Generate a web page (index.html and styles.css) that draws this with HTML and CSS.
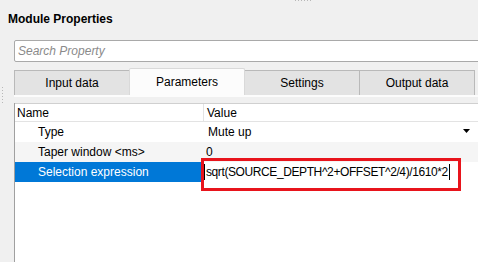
FILE: index.html
```html
<!DOCTYPE html>
<html>
<head>
<meta charset="utf-8">
<link rel="stylesheet" href="styles.css">
</head>
<body>
<div class="top-grip"></div>
<div class="layout">
  <div class="gutter"><div class="side-grip"></div></div>
  <div class="main">
    <div class="title">Module Properties</div>
    <div class="search"><span class="placeholder">Search Property</span></div>
    <div class="tabs">
      <div class="tab">Input data</div>
      <div class="tab active">Parameters</div>
      <div class="tab">Settings</div>
      <div class="tab">Output data</div>
    </div>
    <div class="pane-line"></div>
    <div class="table">
      <div class="row head">
        <div class="c1">Name</div>
        <div class="c2">Value</div>
      </div>
      <div class="row">
        <div class="c1 child">Type</div>
        <div class="c2 combo"><span>Mute up</span><svg class="arrow" width="7" height="4" viewBox="0 0 7 4"><path d="M0 0H7L3.5 4Z" fill="#000"/></svg></div>
      </div>
      <div class="row alt">
        <div class="c1 child">Taper window &lt;ms&gt;</div>
        <div class="c2">0</div>
      </div>
      <div class="row sel">
        <div class="c1 child">Selection expression</div>
        <div class="c2 editor"><span class="caret"></span><span class="expr">sqrt(SOURCE_DEPTH^2+OFFSET^2/4)/1610*2</span><span class="caret end"></span></div>
        <div class="redbox"></div>
      </div>
      <div class="filler"></div>
    </div>
  </div>
</div>
</body>
</html>
```
FILE: styles.css
```css
html, body {
  margin: 0;
  padding: 0;
  background: #f0f0f0;
  font-family: "Segoe UI", "Liberation Sans", Arial, sans-serif;
  font-size: 12px;
  color: #000;
  width: 478px;
  height: 262px;
  overflow: hidden;
}
.top-grip {
  position: absolute;
  left: 295px;
  top: 0;
  width: 17px;
  height: 1px;
  background-image: linear-gradient(to right, #b8b8b8 1px, transparent 1px);
  background-size: 3px 1px;
}
.layout {
  display: flex;
  height: 262px;
}
.gutter {
  width: 14px;
  flex: none;
}
.side-grip {
  margin: 87px 0 0 2px;
  width: 1px;
  height: 16px;
  background-image: linear-gradient(to bottom, #b8b8b8 1px, transparent 1px);
  background-size: 1px 3px;
}
.main {
  flex: 1;
  display: flex;
  flex-direction: column;
  min-width: 0;
}
.title {
  margin-left: -6px;
  height: 40px;
  line-height: 38px;
  font-weight: bold;
  font-size: 12px;
  color: #000;
}
.search {
  height: 20px;
  width: 470px;
  border: 1px solid #a9a9a9;
  border-radius: 2px;
  background: #fff;
  box-sizing: content-box;
  display: flex;
  align-items: center;
  padding-left: 3px;
}
.placeholder {
  font-style: italic;
  color: #8a8a8a;
}
.tabs {
  display: flex;
  margin-top: 6px;
  height: 27px;
  align-items: flex-end;
}
.tab {
  width: 114px;
  height: 24px;
  flex: none;
  background: #e3e3e3;
  border: 1px solid #b9b9b9;
  border-bottom: none;
  box-sizing: content-box;
  display: flex;
  align-items: center;
  justify-content: center;
  margin-right: -1px;
}
.tab.active {
  height: 26px;
  background: #fcfcfc;
  border-color: #d9d9d9;
  border-radius: 2px 2px 0 0;
  position: relative;
  z-index: 1;
}
.pane-line {
  height: 2px;
  background: #fcfcfc;
}
.table {
  margin-top: 6px;
  flex: 1;
  background: #fff;
  border-left: 1px solid #a0a0a0;
  display: flex;
  flex-direction: column;
}
.row {
  display: flex;
  height: 20px;
  flex: none;
  position: relative;
}
.row.head {
  height: 17px;
  border-top: 1px solid #d0d0d0;
  border-bottom: 1px solid #e3e3e3;
  background: #fff;
}
.row.alt { background: #f5f5f5; }
.c1 {
  width: 186px;
  flex: none;
  padding-left: 2px;
  display: flex;
  align-items: center;
  white-space: nowrap;
}
.c2 {
  flex: 1;
  display: flex;
  align-items: center;
  padding-left: 3px;
  white-space: nowrap;
}
.head .c1 { border-right: 1px solid #e3e3e3; }
.c1.child { padding-left: 23px; width: 165px; }
.combo { padding-left: 5px; position: relative; }
.arrow {
  position: absolute;
  left: 260px;
  top: 7px;
}
.sel .c1 {
  background: #0078d7;
  color: #fff;
}
.sel .c2 { background: #fff; }
.editor { padding-left: 1px; }
.expr { letter-spacing: -0.4px; }
.caret {
  width: 1px;
  height: 16px;
  background: #000;
  margin-right: 1px;
  flex: none;
}
.caret.end { margin-left: 1px; }
.redbox {
  position: absolute;
  left: 186px;
  top: -4px;
  width: 254px;
  height: 27px;
  border: 3px solid #e8141c;
  pointer-events: none;
}
.filler { flex: 1; }
```
